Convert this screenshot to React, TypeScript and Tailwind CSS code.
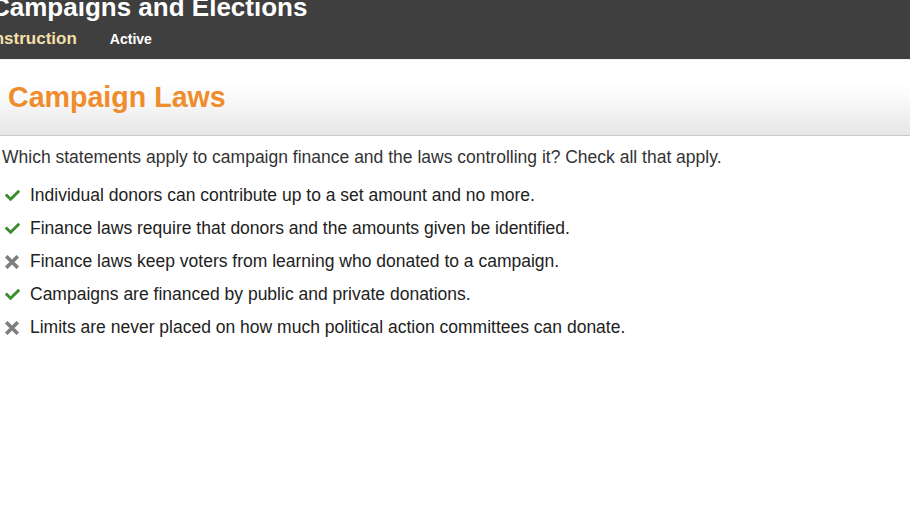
import { FaCheck } from 'react-icons/fa';

const items = [
    { text: 'Individual donors can contribute up to a set amount and no more.', ok: true },
    { text: 'Finance laws require that donors and the amounts given be identified.', ok: true },
    { text: 'Finance laws keep voters from learning who donated to a campaign.', ok: false },
    { text: 'Campaigns are financed by public and private donations.', ok: true },
    { text: 'Limits are never placed on how much political action committees can donate.', ok: false },
];

function HeavyX() {
    return (
        <svg viewBox="0 0 14 14" className="w-[14px] h-[14px]">
            <path d="M2.5 2.5 L11.5 11.5 M11.5 2.5 L2.5 11.5" stroke="#7d7d7d" strokeWidth="3.6" strokeLinecap="square" />
        </svg>
    );
}

export default function App() {
    return (
        <div className="w-[910px] h-[512px] overflow-hidden bg-white font-['Liberation_Sans',Arial,sans-serif]">
            {/* Dark header */}
            <header className="h-[59px] bg-[#3f3f3f] overflow-hidden">
                <h1 className="-mt-[9px] -ml-[9px] text-[26px] leading-[32px] font-bold text-white whitespace-nowrap">
                    Campaigns and Elections
                </h1>
                <div className="flex items-baseline -ml-[11px] mt-[3px]">
                    <span className="text-[17px] font-bold text-[#f3dfa9]">Instruction</span>
                    <span className="ml-[33px] text-[14px] font-bold text-white">Active</span>
                </div>
            </header>

            {/* Lesson title */}
            <div className="h-[77px] border-t border-[#f2f2f2] border-b border-b-[#c9c9c9] bg-gradient-to-b from-white from-30% via-[#fafafa] to-[#e6e6e6] flex items-center pl-[8px]">
                <h2 className="text-[28.6px] font-bold text-[#ef8c2c]">Campaign Laws</h2>
            </div>

            {/* Question */}
            <div className="pt-[10px]">
                <p className="pl-[2px] text-[17.5px] leading-[22px] text-[#333]">
                    Which statements apply to campaign finance and the laws controlling it? Check all that apply.
                </p>
                <ul className="mt-[11px]">
                    {items.map((item) => (
                        <li key={item.text} className="flex items-center h-[33px] text-[17.5px] text-[#222]">
                            <span className="w-[30px] flex pl-[5px]">
                                {item.ok ? (
                                    <FaCheck className="text-[#3b8d2e] w-[15px] h-[15px]" />
                                ) : (
                                    <HeavyX />
                                )}
                            </span>
                            <span>{item.text}</span>
                        </li>
                    ))}
                </ul>
            </div>
        </div>
    );
}
